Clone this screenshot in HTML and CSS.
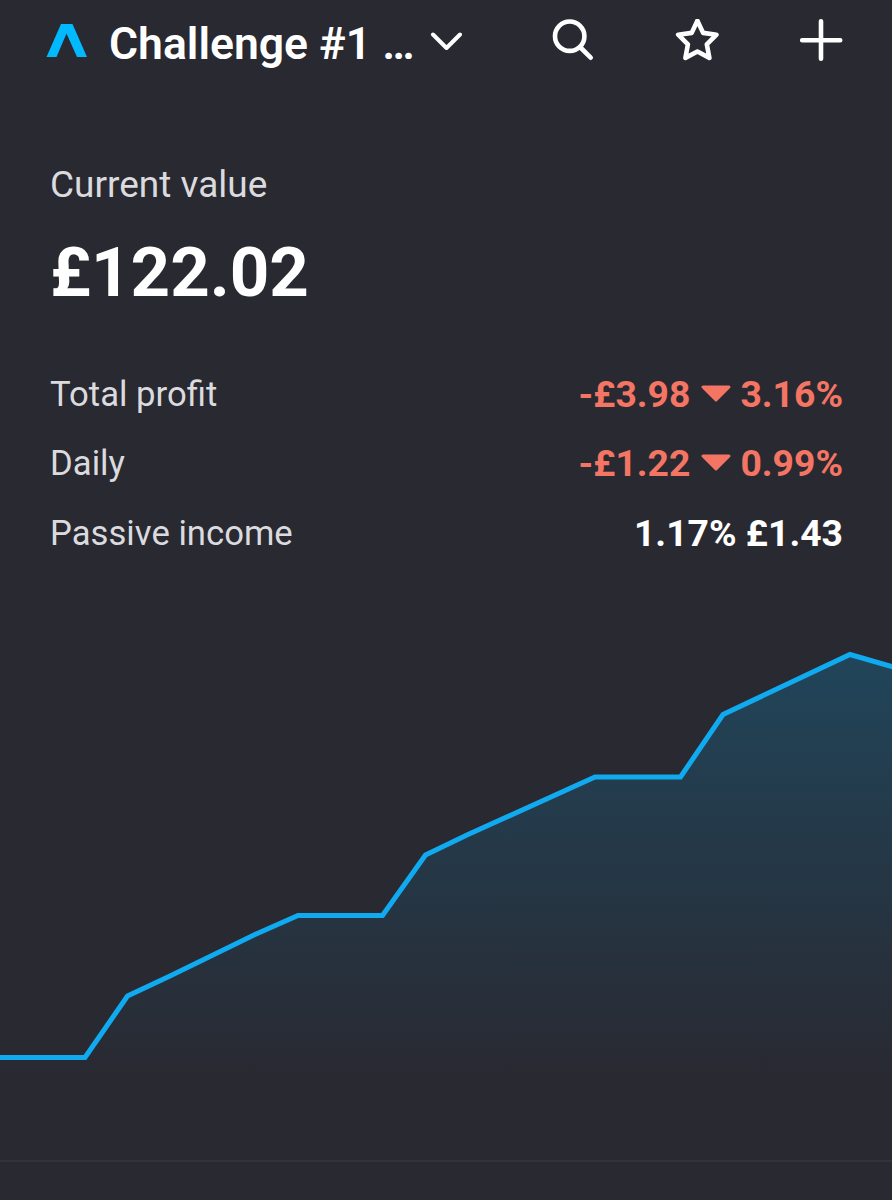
FILE: index.html
```
<!DOCTYPE html>
<html lang="en">

<head>
    <meta charset="UTF-8">
    <meta name="viewport" content="width=device-width, initial-scale=1.0">
    <title>Challenge #1</title>
    <link rel="stylesheet" href="styles.css">
</head>

<body>
    <div class="page">
        <!-- Top bar -->
        <header class="top-bar">
            <svg class="logo" viewBox="0 0 42 36">
                <path d="M15 1h11.500l14.500 33h-10L20.500 10.500 10.500 34h-10z" fill="#00b9ff" />
            </svg>
            <h1>Challenge #1 …</h1>
            <svg class="chevron" viewBox="0 0 32 20">
                <path d="M3 3.500L16.500 17 30 3.500" />
            </svg>
            <nav class="actions">
                <svg viewBox="0 0 44 44">
                    <circle cx="18.700" cy="17.200" r="14.700" />
                    <path d="M29.500 28.500L39.700 38.700" />
                </svg>
                <svg viewBox="0 0 44 44">
                    <path d="M22.400 1.700L28.100 13.900 41.500 15.700 31.800 25.300 34.400 38.900 22.400 32.500 10.400 38.900 12.900 25.300 3.200 15.700 16.700 13.900z" />
                </svg>
                <svg viewBox="0 0 44 44">
                    <path d="M22 2.300v37.400M3.200 21.300h38" />
                </svg>
            </nav>
        </header>

        <!-- Account value -->
        <section class="summary">
            <p class="value-label">Current value</p>
            <p class="value">£122.02</p>
        </section>

        <section class="stats">
            <div class="row">
                <span>Total profit</span>
                <div class="amount loss">
                    <span>-£3.98</span>
                    <svg viewBox="0 0 30 18">
                        <path d="M2 2h26L15 15z" />
                    </svg>
                    <span>3.16%</span>
                </div>
            </div>
            <div class="row">
                <span>Daily</span>
                <div class="amount loss">
                    <span>-£1.22</span>
                    <svg viewBox="0 0 30 18">
                        <path d="M2 2h26L15 15z" />
                    </svg>
                    <span>0.99%</span>
                </div>
            </div>
            <div class="row">
                <span>Passive income</span>
                <div class="amount">1.17% £1.43</div>
            </div>
        </section>

        <!-- Chart -->
        <svg class="chart" viewBox="0 620 892 540">
            <defs>
                <linearGradient id="fade" gradientUnits="userSpaceOnUse" x1="0" y1="654" x2="0" y2="1085">
                    <stop offset="0" stop-color="#21455a" />
                    <stop offset="1" stop-color="#292931" />
                </linearGradient>
            </defs>
            <path class="area" d="M0 1057.500H85L127.500 996 170 976 255 934.500 298 915.500H382.500L425.500 855 468 834.500 595 777H680.500L723 714.500 850 654.500 900 669V1160H0z" />
            <path class="line" d="M-5 1057.500H85L127.500 996 170 976 255 934.500 298 915.500H382.500L425.500 855 468 834.500 595 777H680.500L723 714.500 850 654.500 900 669" />
        </svg>
        <div class="divider"></div>
    </div>
</body>

</html>
```
FILE: styles.css
```
/* Global Style */
* {
    margin: 0;
    padding: 0;
    box-sizing: border-box;
}

body {
    font-family: Roboto, 'Liberation Sans', sans-serif;
    background-color: #292931;
    color: #fff;
}

.page {
    height: 1200px;
    overflow: hidden;
}

/* Top bar */
.top-bar {
    display: flex;
    align-items: center;
    height: 82px;
    padding: 0 49px 0 46px;
}

.logo {
    width: 42px;
    height: 36px;
    margin-right: 21px;
}

h1 {
    width: 305px;
    padding-top: 6px;
    font-size: 44.500px;
    font-weight: 600;
    line-height: 52px;
    white-space: nowrap;
}

.chevron {
    width: 32px;
    height: 20px;
    margin-left: 16px;
}

.chevron,
.actions svg {
    fill: none;
    stroke: #fff;
    stroke-width: 4.600;
    stroke-linecap: round;
    stroke-linejoin: round;
}

.chevron {
    stroke-width: 4;
}

.actions {
    display: flex;
    gap: 80px;
    margin-left: auto;
}

.actions svg {
    width: 44px;
    height: 44px;
}

/* Account value */
.summary {
    padding: 81px 50px 0;
}

.value-label {
    font-size: 37px;
    line-height: 44px;
    color: #dbdbdf;
}

.value {
    margin-top: 26px;
    font-size: 69px;
    font-weight: 700;
    line-height: 80px;
}

.stats {
    padding: 46px 49px 0 50px;
}

.row {
    display: flex;
    justify-content: space-between;
    align-items: center;
    height: 69.500px;
    font-size: 34.700px;
    color: #dbdbdf;
}

.amount {
    display: flex;
    align-items: center;
    font-size: 37.300px;
    font-weight: 700;
    color: #fff;
}

.loss {
    color: #f47564;
}

.loss svg {
    width: 30px;
    height: 18px;
    margin: 0 9px 0 11px;
    fill: #f47564;
    stroke: #f47564;
    stroke-width: 3;
    stroke-linejoin: round;
}

/* Chart */
.chart {
    display: block;
    width: 892px;
    height: 540px;
    margin-top: 52px;
}

.area {
    fill: url(#fade);
}

.line {
    fill: none;
    stroke: #10aaf0;
    stroke-width: 5;
}

.divider {
    height: 2px;
    background-color: #343438;
}
```
